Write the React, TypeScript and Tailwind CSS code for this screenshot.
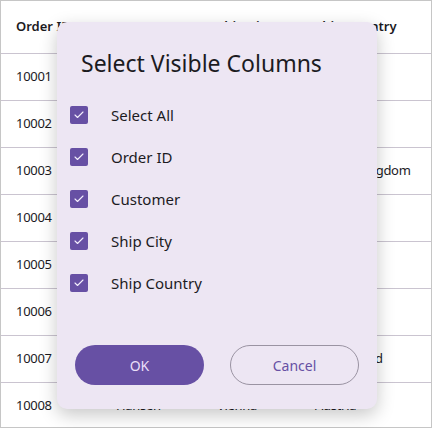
import { Check } from "lucide-react"

const rows = [
  { id: "10001", customer: "Maria Anders", city: "Berlin", country: "Germany" },
  { id: "10002", customer: "Ana Trujillo", city: "Mexico D.F.", country: "Mexico" },
  { id: "10003", customer: "Thomas Hardy", city: "London", country: "United Kingdom" },
  { id: "10004", customer: "Laurence Lebihan", city: "Marseille", country: "France" },
  { id: "10005", customer: "Elizabeth Lincoln", city: "Tsawassen", country: "Canada" },
  { id: "10006", customer: "Victoria Ashworth", city: "London", country: "UK" },
  { id: "10007", customer: "Yang Wang", city: "Bern", country: "Switzerland" },
  { id: "10008", customer: "Hansen", city: "Vienna", country: "Austria" },
]

const columns = ["Select All", "Order ID", "Customer", "Ship City", "Ship Country"]

function Checkbox() {
  return (
    <div className="flex h-[18px] w-[18px] items-center justify-center rounded-[2px] bg-[#6750a4]">
      <Check className="h-[12px] w-[12px] text-[#f3eefc]" strokeWidth={2.25} />
    </div>
  )
}

export default function App() {
  return (
    <div className="relative h-[428px] w-[432px] overflow-hidden bg-white font-['Noto_Sans',sans-serif]">
      <div className="h-full w-full overflow-hidden border border-[#c6c6c6]">
        <div className="grid h-[53px] grid-cols-[100px_101px_98px_1fr] items-center border-b border-[#cac4d0] text-[13px] font-semibold text-[#1c1b1f]">
          <div className="whitespace-nowrap pl-[15px]">Order ID</div>
          <div className="whitespace-nowrap pl-[15px]">Customer</div>
          <div className="whitespace-nowrap pl-[15px]">Ship City</div>
          <div className="whitespace-nowrap pl-[15px]">Ship Country</div>
        </div>
        {rows.map((r) => (
          <div
            key={r.id}
            className="grid h-[47px] shrink-0 grid-cols-[100px_101px_98px_1fr] items-center border-b border-[#cac4d0] text-[13px] tracking-[-0.3px] text-[#1c1b1f]"
          >
            <div className="pl-[15px]">{r.id}</div>
            <div className="whitespace-nowrap pl-[15px]">{r.customer}</div>
            <div className="whitespace-nowrap pl-[15px]">{r.city}</div>
            <div className="whitespace-nowrap pl-[15px]">{r.country}</div>
          </div>
        ))}
      </div>

      <div className="absolute left-[57px] top-[22px] flex h-[387px] w-[320px] flex-col rounded-[10px] bg-[#ede6f3] shadow-[0_6px_18px_rgba(0,0,0,0.22)]">
        <div className="pl-[24px] pt-[26px] text-[23px] leading-[30px] text-[#1c1b1f]">Select Visible Columns</div>
        <div className="mt-[16px] flex flex-col">
          {columns.map((c) => (
            <div key={c} className="flex h-[42px] items-center pl-[13px]">
              <Checkbox />
              <span className="ml-[23px] text-[15px] text-[#1c1b1f]">{c}</span>
            </div>
          ))}
        </div>
        <div className="mt-auto mb-[24px] flex gap-[26px] pl-[18px]">
          <button className="h-[40px] w-[129px] rounded-full bg-[#6750a4] text-[14px] text-[#eadff9]">OK</button>
          <button className="h-[40px] w-[129px] rounded-full border border-[#9a93a2] text-[14px] text-[#6750a4]">Cancel</button>
        </div>
      </div>
    </div>
  )
}
